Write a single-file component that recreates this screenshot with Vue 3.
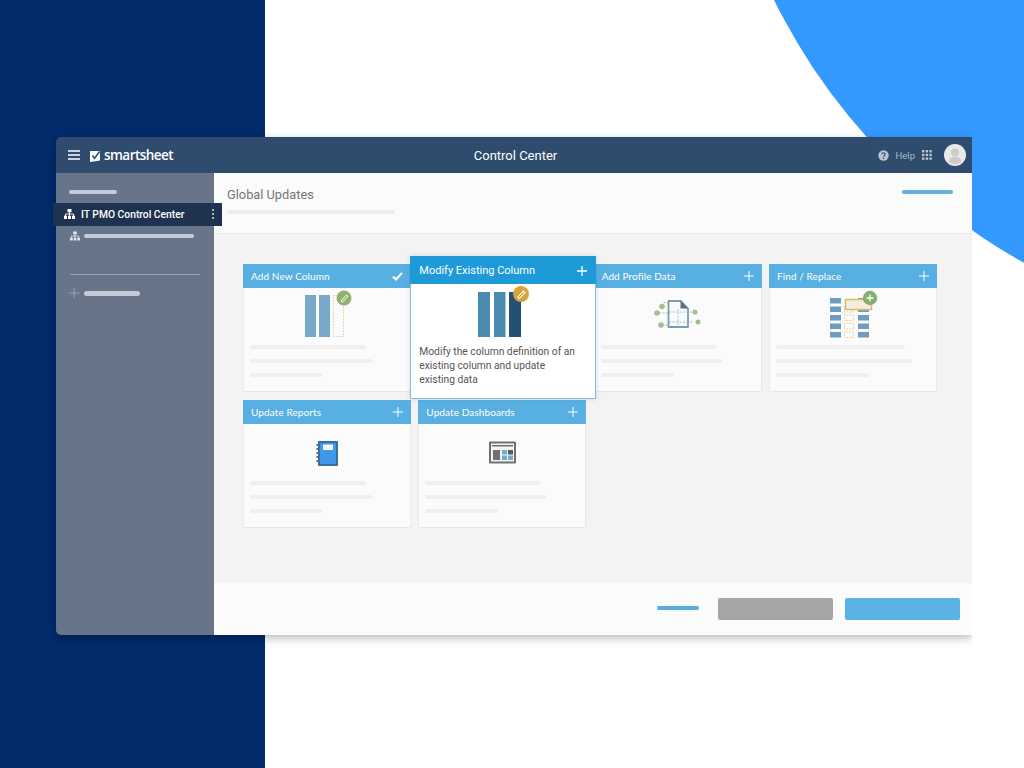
<template>
  <div class="page">
    <div class="navy-band"></div>
    <div class="blue-circle"></div>

    <div class="window">
      <header class="topbar">
        <div class="brand">
          <svg class="menu-icon" width="12" height="10" viewBox="0 0 12 10">
            <path d="M0 1h12M0 5h12M0 9h12" stroke="#fff" stroke-width="1.5" />
          </svg>
          <svg class="logo-icon" width="11" height="12" viewBox="0 0 11 12">
            <path d="M0 1l10 0v9.5L0 12z" fill="#fff" />
            <path d="M2.5 5.5l2 3L9.5 1.5" fill="none" stroke="#2f4c6e" stroke-width="1.5" />
          </svg>
          <span class="logo-text">smartsheet</span>
        </div>
        <div class="topbar-title">Control Center</div>
        <div class="topbar-right">
          <svg width="11" height="11" viewBox="0 0 11 11">
            <circle cx="5.5" cy="5.5" r="5.2" fill="#b9c4d0" />
            <path d="M3.9 4.3c0-2.1 3.3-2.1 3.3-.1 0 1.2-1.6 1.2-1.6 2.5" fill="none" stroke="#2f4c6e" stroke-width="1.1" />
            <circle cx="5.6" cy="8.2" r=".7" fill="#2f4c6e" />
          </svg>
          <span class="help">Help</span>
          <svg class="apps" width="10" height="10" viewBox="0 0 10 10">
            <g fill="#b9c4d0">
              <rect v-for="d in appDots" :key="d.key" :x="d.x" :y="d.y" width="2.4" height="2.4" />
            </g>
          </svg>
          <svg class="avatar" width="22" height="22" viewBox="0 0 22 22">
            <circle cx="11" cy="11" r="11" fill="#e9e9e9" />
            <circle cx="11" cy="8.5" r="4" fill="#cbcbcb" />
            <path d="M4.5 18c.6-4 3.2-5.2 6.5-5.2s5.900 1.200 6.500 5.200a11 11 0 0 1-13 0z" fill="#cbcbcb" />
          </svg>
        </div>
      </header>

      <div class="body">
        <aside class="sidebar">
          <div class="side-bar side-bar-top"></div>
          <div class="side-active">
            <svg width="11" height="10" viewBox="0 0 11 10">
              <path d="M3.500 0h4v3.200h-4zM0 6.800h3v3.200H0zM4 6.800h3v3.200H4zM8 6.800h3v3.200H8z" fill="#fff" />
              <path d="M5.500 3v2M1.500 7V5h8v2M5.500 5v2" fill="none" stroke="#fff" stroke-width=".9" />
            </svg>
            <span class="side-active-label">IT PMO Control Center</span>
            <span class="kebab"><i></i><i></i><i></i></span>
          </div>
          <div class="side-row side-row-tree">
            <svg width="10" height="10" viewBox="0 0 11 10">
              <path d="M3.500 0h4v3.200h-4zM0 6.800h3v3.200H0zM4 6.800h3v3.200H4zM8 6.800h3v3.200H8z" fill="#e4e7ec" />
              <path d="M5.500 3v2M1.500 7V5h8v2M5.500 5v2" fill="none" stroke="#e4e7ec" stroke-width=".9" />
            </svg>
            <div class="side-bar side-bar-long"></div>
          </div>
          <div class="side-divider"></div>
          <div class="side-row side-row-add">
            <svg width="10" height="10" viewBox="0 0 10 10">
              <path d="M5 0v10M0 5h10" stroke="#98a3b2" stroke-width="1" />
            </svg>
            <div class="side-bar side-bar-short"></div>
          </div>
        </aside>

        <main class="main">
          <div class="page-head">
            <div class="head-text">
              <h1>Global Updates</h1>
              <div class="head-line"></div>
            </div>
            <div class="head-link"></div>
          </div>

          <div class="content">
            <div class="cards">
              <div v-for="card in cards" :key="card.title" class="cell">
                <!-- hovered card grows out of its grid cell -->
                <div v-if="card.hover" class="card-hover">
                  <div class="hover-title">
                    <span>{{ card.title }}</span>
                    <svg width="10" height="10" viewBox="0 0 10 10">
                      <path d="M5 0v10M0 5h10" stroke="#fff" stroke-width="1.300" />
                    </svg>
                  </div>
                  <svg class="hover-icon" width="184" height="55" viewBox="0 0 184 55">
                    <rect x="67" y="8" width="12" height="45" fill="#4c8bb0" />
                    <rect x="83" y="8" width="11.500" height="45" fill="#4c8bb0" />
                    <rect x="98" y="8" width="12" height="45" fill="#235175" />
                    <circle cx="110" cy="10" r="8" fill="#d9a437" />
                    <path d="M106.800 13l5.500-6 1.700 1.500-5.500 6z" fill="none" stroke="#fff" stroke-width="1.100" />
                  </svg>
                  <p>Modify the column definition of an existing column and update existing data</p>
                </div>

                <div v-else class="card">
                  <div class="card-title">
                    <span>{{ card.title }}</span>
                    <svg v-if="card.done" width="11" height="9" viewBox="0 0 11 9">
                      <path d="M1 4.500l3 3 6-6.500" fill="none" stroke="#fff" stroke-width="2" />
                    </svg>
                    <svg v-else width="10" height="10" viewBox="0 0 10 10">
                      <path d="M5 0v10M0 5h10" stroke="#fff" stroke-width="1" />
                    </svg>
                  </div>
                  <svg class="card-icon" width="168" height="56" viewBox="0 0 168 56">
                    <g v-if="card.icon === 'column'">
                      <rect x="62" y="7" width="11" height="42" fill="#79a9c8" />
                      <rect x="76" y="7" width="11" height="42" fill="#79a9c8" />
                      <rect x="90.500" y="7.500" width="10" height="41" fill="none" stroke="#d8cf9c" stroke-dasharray="1.500 1.500" />
                      <circle cx="101" cy="10" r="7.500" fill="#8fb36f" />
                      <path d="M98 13l5.500-6 1.500 1.300-5.500 6z" fill="none" stroke="#fff" stroke-width="1" />
                    </g>
                    <g v-else-if="card.icon === 'profile'">
                      <path d="M75 14.500h-6M74 25h-9M74 37h-6M89 24h13M89 34h10" stroke="#8aa8bb" stroke-width=".8" stroke-dasharray="2 1.500" />
                      <g fill="#a9bd8c">
                        <circle cx="68" cy="19" r="2.800" transform="translate(0 -0.500)" />
                        <circle cx="63" cy="25" r="2.800" />
                        <circle cx="67" cy="37" r="2.800" />
                        <circle cx="101" cy="24" r="2.500" />
                        <circle cx="104" cy="34" r="2.500" />
                      </g>
                      <path d="M74.500 13h12.500l7 7.500v18.500h-19.500z" fill="#f8fafb" stroke="#7d9bb1" stroke-width="1.800" stroke-linejoin="round" />
                      <path d="M86.500 12.500l7.500 8h-7.500z" fill="#5f6c7e" />
                      <path d="M75 24h19M75 34h19M84 21v17" stroke="#8aa8bb" stroke-width=".7" stroke-dasharray="2 1.500" />
                    </g>
                    <g v-else-if="card.icon === 'find'">
                      <g fill="#6f9dbf">
                        <rect v-for="y in tableRows" :key="'l' + y" x="61" :y="y" width="11" height="5.500" />
                        <rect v-for="y in tableRows" :key="'r' + y" x="89" :y="y" width="11" height="5.500" />
                      </g>
                      <g fill="none" stroke="#e0c998" stroke-width=".8" stroke-dasharray="1.500 1">
                        <rect v-for="y in tableRows.slice(1)" :key="'m' + y" x="75.500" :y="y" width="9" height="5.500" />
                      </g>
                      <rect x="76.500" y="11.500" width="26" height="10" fill="#f3eedd" stroke="#dcb878" stroke-width="1.500" />
                      <circle cx="101" cy="10" r="7.200" fill="#86ae6d" />
                      <path d="M101 6.500v7M97.500 10h7" stroke="#fff" stroke-width="1.300" />
                    </g>
                    <g v-else-if="card.icon === 'report'">
                      <rect x="75" y="17" width="20" height="25" rx="1" fill="#3b6c9c" />
                      <rect x="77" y="19" width="16" height="21" fill="#3f97e8" />
                      <rect x="80" y="20.500" width="10" height="5.500" fill="#f2f5f8" />
                      <g fill="#51708f">
                        <rect v-for="y in [20, 24, 28, 32, 36]" :key="y" x="73.500" :y="y" width="3" height="2" />
                      </g>
                    </g>
                    <g v-else-if="card.icon === 'dash'">
                      <rect x="71" y="17.500" width="27" height="22" rx="1" fill="#707070" />
                      <rect x="73" y="19.500" width="23" height="18" fill="#f4f4f4" />
                      <rect x="74" y="21" width="21" height="1.500" fill="#707070" />
                      <rect x="75" y="26" width="7" height="10" fill="#707070" />
                      <rect x="84" y="26" width="5" height="4.500" fill="#70acd0" />
                      <rect x="90" y="26" width="5" height="4.500" fill="#5b5b5b" />
                      <rect x="84" y="31.500" width="5" height="4.500" fill="#70acd0" />
                      <rect x="90" y="31.500" width="5" height="4.500" fill="#70acd0" />
                    </g>
                  </svg>
                  <div class="card-lines" :class="{ wide: card.wide }">
                    <div class="line l1"></div>
                    <div class="line l2"></div>
                    <div class="line l3"></div>
                  </div>
                </div>
              </div>
            </div>
          </div>

          <footer class="foot">
            <div class="foot-link"></div>
            <div class="foot-btn foot-btn-grey"></div>
            <div class="foot-btn foot-btn-blue"></div>
          </footer>
        </main>
      </div>
    </div>
  </div>
</template>

<script setup>
const cards = [
  { title: 'Add New Column', icon: 'column', done: true },
  { title: 'Modify Existing Column', hover: true },
  { title: 'Add Profile Data', icon: 'profile' },
  { title: 'Find / Replace', icon: 'find', wide: true },
  { title: 'Update Reports', icon: 'report' },
  { title: 'Update Dashboards', icon: 'dash' }
]

const tableRows = [10, 18.5, 27, 35.5, 44]

const appDots = []
for (let r = 0; r < 3; r++) {
  for (let c = 0; c < 3; c++) {
    appDots.push({ key: r + '-' + c, x: c * 3.7, y: r * 3.7 })
  }
}
</script>

<style>
html,
body {
  margin: 0;
  background: #fff;
}
</style>

<style scoped>
.page {
  position: relative;
  width: 1024px;
  height: 768px;
  overflow: hidden;
  background: #fff;
  padding: 137px 0 0 56px;
  box-sizing: border-box;
  font-family: Roboto, "Liberation Sans", sans-serif;
}

.navy-band {
  position: absolute;
  left: 0;
  top: 0;
  width: 265px;
  height: 768px;
  background: #012b6b;
}

.blue-circle {
  position: absolute;
  left: 711px;
  top: -880px;
  width: 1220px;
  height: 1220px;
  border-radius: 50%;
  background: #3399ff;
}

.window {
  position: relative;
  width: 916px;
  height: 498px;
  display: flex;
  flex-direction: column;
  box-shadow: 0 3px 10px rgba(0, 0, 0, 0.28);
  border-radius: 5px 0 0 5px;
  clip-path: inset(-20px 0 -20px -20px);
}

.topbar {
  height: 36px;
  flex: none;
  display: grid;
  grid-template-columns: 1fr auto 1fr;
  align-items: center;
  background: #2f4c6e;
  border-radius: 5px 0 0 0;
  padding: 0 6px 0 9px;
}

.brand {
  display: flex;
  align-items: center;
  margin-left: 3px;
}

.menu-icon {
  margin-right: 10px;
}

.logo-icon {
  margin-right: 3px;
  margin-top: 2px;
}

.logo-text {
  font-family: "Open Sans", sans-serif;
  font-weight: 600;
  font-size: 13.5px;
  letter-spacing: -0.55px;
  color: #fff;
}

.topbar-title {
  font-size: 13px;
  color: #fff;
}

.topbar-right {
  display: flex;
  align-items: center;
  justify-content: flex-end;
}

.help {
  font-size: 9.5px;
  color: #a9b8c8;
  margin: 0 7px 0 7px;
}

.apps {
  margin-right: 12px;
}

.body {
  flex: 1;
  display: flex;
  min-height: 0;
}

.sidebar {
  width: 158px;
  flex: none;
  background: #67748a;
  border-radius: 0 0 0 5px;
  padding-top: 17px;
  box-sizing: border-box;
}

.side-bar {
  height: 4px;
  border-radius: 2px;
  background: #c3cbd6;
}

.side-bar-top {
  width: 48px;
  margin-left: 13px;
}

.side-active {
  position: relative;
  z-index: 2;
  height: 23px;
  margin: 9px -8px 0 -3px;
  padding: 0 0 1px 11px;
  box-sizing: border-box;
  display: flex;
  align-items: center;
  background: #1f3350;
  color: #fff;
}

.side-active-label {
  margin-left: 6px;
  font-size: 10.3px;
  font-weight: 500;
}

.kebab {
  margin-left: auto;
  margin-right: 8px;
  display: flex;
  flex-direction: column;
  gap: 2px;
}

.kebab i {
  display: block;
  width: 2px;
  height: 2px;
  border-radius: 50%;
  background: #dfe4ea;
}

.side-row {
  display: flex;
  align-items: center;
  gap: 4px;
  margin-left: 14px;
}

.side-row-tree {
  margin-top: 5px;
}

.side-bar-long {
  width: 110px;
}

.side-bar-short {
  width: 56px;
  height: 5px;
  border-radius: 3px;
}

.side-divider {
  height: 1px;
  width: 130px;
  margin: 33px 0 0 14px;
  background: #98a3b2;
}

.side-row-add {
  margin-top: 13px;
  margin-left: 13px;
  gap: 5px;
}

.main {
  flex: 1;
  display: flex;
  flex-direction: column;
  min-width: 0;
}

.page-head {
  height: 61px;
  flex: none;
  box-sizing: border-box;
  display: flex;
  justify-content: space-between;
  align-items: flex-start;
  padding: 13px 19px 0 13px;
  background: #fbfbfb;
  border-bottom: 1px solid #ececec;
}

.head-text {
  padding-top: 1px;
}

h1 {
  margin: 0;
  font-size: 12.8px;
  line-height: 16px;
  font-weight: 400;
  color: #757575;
}

.head-line {
  width: 168px;
  height: 4px;
  margin-top: 7px;
  border-radius: 2px;
  background: #ececec;
}

.head-link {
  width: 51px;
  height: 4px;
  margin-top: 4px;
  border-radius: 2px;
  background: #62b2da;
}

.content {
  flex: 1;
  background: #f3f3f3;
  padding: 30px 0 0 29px;
  box-sizing: border-box;
}

.cards {
  display: grid;
  grid-template-columns: repeat(4, 168px);
  grid-auto-rows: 128px;
  gap: 8px 7.33px;
}

.cell {
  position: relative;
}

.card {
  height: 100%;
  background: #fbfbfb;
  border: 1px solid #e9e9e9;
  border-top: none;
  box-sizing: border-box;
  display: flex;
  flex-direction: column;
}

.card-title {
  height: 24px;
  flex: none;
  margin: 0 -1px;
  padding: 0 8px;
  display: flex;
  align-items: center;
  justify-content: space-between;
  background: #58b0e2;
  color: #fff;
  font-family: Lato, sans-serif;
  font-size: 10px;
  letter-spacing: 0.1px;
}

.card-icon {
  display: block;
  margin-left: -1px;
}

.card-lines {
  padding: 1px 0 0 6px;
}

.line {
  height: 4px;
  margin-bottom: 10px;
  border-radius: 2px;
  background: #efefef;
}

.l1 {
  width: 116px;
}

.l2 {
  width: 122px;
}

.l3 {
  width: 73px;
}

.wide .l1 {
  width: 129px;
}

.wide .l2 {
  width: 136px;
}

.wide .l3 {
  width: 93px;
}

.card-hover {
  position: absolute;
  z-index: 2;
  left: -8px;
  top: -8px;
  width: 186px;
  height: 143px;
  box-sizing: border-box;
  background: #fff;
  border: 1px solid #8dbbd6;
  border-top: none;
  box-shadow: 0 0 5px rgba(0, 0, 0, 0.12);
}

.hover-title {
  height: 28px;
  margin: 0 -1px;
  padding: 1px 9px 0;
  box-sizing: border-box;
  display: flex;
  align-items: center;
  justify-content: space-between;
  background: #1f9ad9;
  color: #fff;
  font-size: 11px;
}

.hover-icon {
  display: block;
}

.card-hover p {
  margin: 6px 16px 0 8px;
  font-size: 10.25px;
  line-height: 14px;
  color: #555;
}

.foot {
  height: 52px;
  flex: none;
  box-sizing: border-box;
  display: flex;
  align-items: center;
  justify-content: flex-end;
  padding-right: 12px;
  background: #fbfbfb;
}

.foot-link {
  width: 42px;
  height: 4px;
  border-radius: 2px;
  margin: 0 19px 2px 0;
  background: #57aedd;
}

.foot-btn {
  width: 115px;
  height: 22px;
  border-radius: 2px;
}

.foot-btn-grey {
  background: #a6a6a6;
  margin-right: 12px;
}

.foot-btn-blue {
  background: #5ab2e4;
}
</style>
